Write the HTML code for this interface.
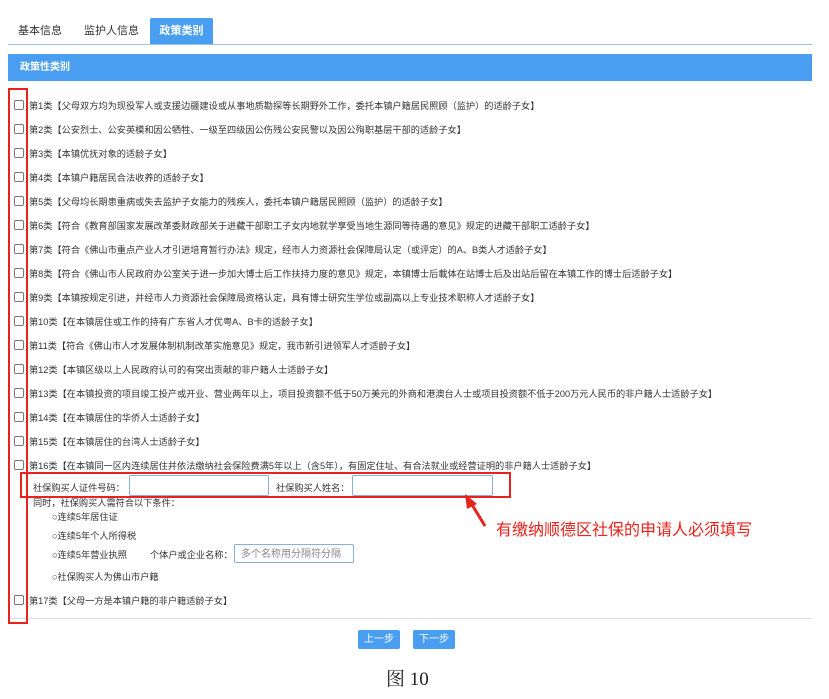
<!DOCTYPE html>
<html><head><meta charset="utf-8"><style>
body{margin:0;width:829px;height:699px;background:#fff;font-family:"Liberation Sans","Noto Sans CJK SC",sans-serif;position:relative;overflow:hidden;color:#333}
.a{position:absolute;white-space:nowrap}
.tab{position:absolute;top:18px;height:26px;line-height:26px;font-size:11px;color:#333}
.row{position:absolute;left:14px;font-size:9.2px;line-height:14px;white-space:nowrap}
.cb{display:inline-block;width:8px;height:8px;border:1px solid #777;border-radius:2px;vertical-align:-1px;margin-right:5px}
.inp{position:absolute;border:1px solid #8ab0d8;border-radius:2px;background:#fff}
.btn{position:absolute;top:630px;width:42px;height:19px;background:#4a9ef2;color:#fff;font-size:10px;line-height:19px;text-align:center;border-radius:2px}
</style></head><body>
<div class="tab" style="left:18px">基本信息</div>
<div class="tab" style="left:84px">监护人信息</div>
<div class="tab" style="left:150px;width:63px;background:#4a9ef2;color:#fff;text-align:center;font-weight:bold;border-radius:2px 2px 0 0">政策类别</div>
<div class="a" style="left:8px;top:44px;width:804px;height:1px;background:#9cc4e4"></div>
<div class="a" style="left:8px;top:54px;width:804px;height:27px;background:#4a9ef2;color:#fff;font-size:10px;font-weight:bold;line-height:27px;padding-left:12px;box-sizing:border-box">政策性类别</div>

<div class="row" style="top:99px"><span class="cb"></span>第1类【父母双方均为现役军人或支援边疆建设或从事地质勘探等长期野外工作，委托本镇户籍居民照顾（监护）的适龄子女】</div>
<div class="row" style="top:123px"><span class="cb"></span>第2类【公安烈士、公安英模和因公牺牲、一级至四级因公伤残公安民警以及因公殉职基层干部的适龄子女】</div>
<div class="row" style="top:147px"><span class="cb"></span>第3类【本镇优抚对象的适龄子女】</div>
<div class="row" style="top:171px"><span class="cb"></span>第4类【本镇户籍居民合法收养的适龄子女】</div>
<div class="row" style="top:195px"><span class="cb"></span>第5类【父母均长期患重病或失去监护子女能力的残疾人，委托本镇户籍居民照顾（监护）的适龄子女】</div>
<div class="row" style="top:219px"><span class="cb"></span>第6类【符合《教育部国家发展改革委财政部关于进藏干部职工子女内地就学享受当地生源同等待遇的意见》规定的进藏干部职工适龄子女】</div>
<div class="row" style="top:243px"><span class="cb"></span>第7类【符合《佛山市重点产业人才引进培育暂行办法》规定，经市人力资源社会保障局认定（或评定）的A、B类人才适龄子女】</div>
<div class="row" style="top:267px"><span class="cb"></span>第8类【符合《佛山市人民政府办公室关于进一步加大博士后工作扶持力度的意见》规定，本镇博士后載体在站博士后及出站后留在本镇工作的博士后适龄子女】</div>
<div class="row" style="top:291px"><span class="cb"></span>第9类【本镇按规定引进，并经市人力资源社会保障局资格认定，具有博士研究生学位或副高以上专业技术职称人才适龄子女】</div>
<div class="row" style="top:315px"><span class="cb"></span>第10类【在本镇居住或工作的持有广东省人才优粤A、B卡的适龄子女】</div>
<div class="row" style="top:339px"><span class="cb"></span>第11类【符合《佛山市人才发展体制机制改革实施意见》规定，我市新引进领军人才适龄子女】</div>
<div class="row" style="top:363px"><span class="cb"></span>第12类【本镇区级以上人民政府认可的有突出贡献的非户籍人士适龄子女】</div>
<div class="row" style="top:387px"><span class="cb"></span>第13类【在本镇投资的项目竣工投产或开业、营业两年以上，项目投资额不低于50万美元的外商和港澳台人士或项目投资额不低于200万元人民币的非户籍人士适龄子女】</div>
<div class="row" style="top:411px"><span class="cb"></span>第14类【在本镇居住的华侨人士适龄子女】</div>
<div class="row" style="top:435px"><span class="cb"></span>第15类【在本镇居住的台湾人士适龄子女】</div>
<div class="row" style="top:459px"><span class="cb"></span>第16类【在本镇同一区内连续居住并依法缴纳社会保险费满5年以上（含5年），有固定住址、有合法就业或经营证明的非户籍人士适龄子女】</div>

<div class="a" style="left:33px;top:480px;font-size:9.2px">社保购买人证件号码：</div>
<div class="inp" style="left:129px;top:475px;width:138px;height:19px"></div>
<div class="a" style="left:276px;top:480px;font-size:9.2px">社保购买人姓名：</div>
<div class="inp" style="left:352px;top:475px;width:139px;height:19px"></div>
<div class="a" style="left:33px;top:495px;font-size:9.2px">同时，社保购买人需符合以下条件：</div>
<div class="a" style="left:52px;top:509px;font-size:9.2px">○连续5年居住证</div>
<div class="a" style="left:52px;top:528px;font-size:9.2px">○连续5年个人所得税</div>
<div class="a" style="left:52px;top:547px;font-size:9.2px">○连续5年营业执照</div>
<div class="a" style="left:150px;top:547px;font-size:9.2px">个体户或企业名称：</div>
<div class="inp" style="left:234px;top:544px;width:120px;height:19px;font-size:10px;color:#888;line-height:19px;padding-left:6px;box-sizing:border-box">多个名称用分隔符分隔</div>
<div class="a" style="left:52px;top:569px;font-size:9.2px">○社保购买人为佛山市户籍</div>
<div class="row" style="top:594px"><span class="cb"></span>第17类【父母一方是本镇户籍的非户籍适龄子女】</div>
<div class="a" style="left:8px;top:618px;width:804px;height:1px;background:#ddd"></div>

<div class="a" style="left:8px;top:88px;width:16px;height:532px;border:2px solid #e8221c"></div>
<div class="a" style="left:20px;top:472px;width:487px;height:22px;border:2px solid #e8221c"></div>
<svg class="a" style="left:455px;top:493px" width="40" height="40"><path d="M30 33 L16 10" stroke="#e8221c" stroke-width="3"/><path d="M10 1 L22 11 L12 16 Z" fill="#e8221c"/></svg>
<div class="a" style="left:496px;top:516px;font-size:16px;color:#e8221c">有缴纳顺德区社保的申请人必须填写</div>

<div class="btn" style="left:358px">上一步</div>
<div class="btn" style="left:413px">下一步</div>
<div class="a" style="left:386px;top:664px;font-size:19px;font-family:'Liberation Serif','Noto Serif CJK SC',serif;color:#222">图 10</div>
</body></html>
